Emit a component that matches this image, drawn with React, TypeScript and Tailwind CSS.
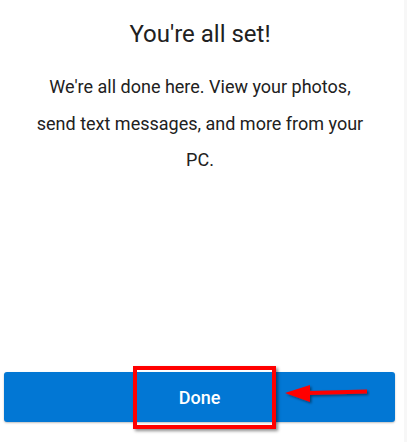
import React from "react";

export default function App() {
  return (
    <div
      className="w-[407px] h-[442px] flex bg-white overflow-hidden"
      style={{ fontFamily: "Roboto, 'Noto Sans', sans-serif" }}
    >
      <div className="w-[400px] h-full flex flex-col">
        <h1 className="mt-[18px] text-center text-[24px] leading-[32px] font-normal text-[#212121]">
          You're all set!
        </h1>
        <p className="mt-[19px] text-center text-[18px] leading-[36.5px] text-[#212121]">
          We're all done here. View your photos,
          <br />
          send text messages, and more from your
          <br />
          PC.
        </p>
        <div className="flex-1" />
        <div className="relative mb-[20px] ml-[4px] w-[391px] h-[50px] rounded-[3px] bg-[#0277d4] flex items-center justify-center shadow-[0_1px_2px_rgba(0,0,0,0.25)]">
          <span className="text-white text-[18px] font-medium">Done</span>
          <div className="absolute left-[129px] top-[-6px] w-[143px] h-[63px] border-[4px] border-[#ff0000] shadow-[2px_2px_3px_rgba(0,0,0,0.45)]" />
          <svg
            className="absolute left-[274px] top-[10px]"
            width="92"
            height="30"
            viewBox="0 0 92 30"
          >
            <defs>
              <filter id="sh" x="-20%" y="-50%" width="140%" height="200%">
                <feDropShadow dx="1.5" dy="1.5" stdDeviation="1.2" floodColor="#000" floodOpacity="0.45" />
              </filter>
            </defs>
            <g filter="url(#sh)">
              <polygon points="7,11 32,3 32,20" fill="#ff0000" />
              <polygon points="30,9 89,7.5 89,11.5 30,13" fill="#ff0000" />
            </g>
          </svg>
        </div>
      </div>
      <div className="w-[4px] h-full" />
      <div className="w-[3px] h-full bg-[#f7f7f7]" />
    </div>
  );
}
